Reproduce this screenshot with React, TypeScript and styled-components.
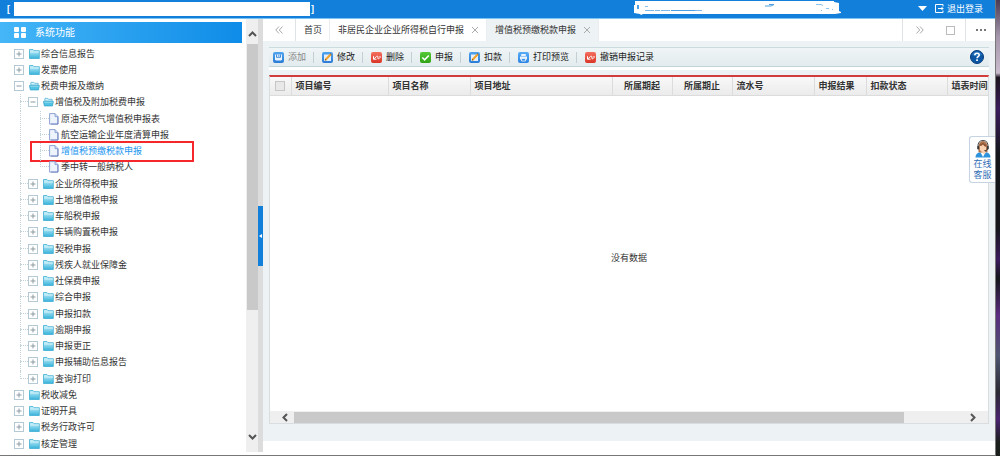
import React from 'react';
import styled, { createGlobalStyle, css } from 'styled-components';

const GlobalStyle = createGlobalStyle`
  * { box-sizing: border-box; }
  body {
    margin: 0;
    background: #fff;
    color: #333;
    font: 9px/16px "Liberation Sans", "Noto Sans CJK SC", sans-serif;
  }
  button {
    border: 0;
    padding: 0;
    background: none;
    color: inherit;
    font: inherit;
    cursor: pointer;
    white-space: nowrap;
  }
  a { color: inherit; text-decoration: none; }
  svg { display: block; flex: none; }
`;

const Desktop = styled.div`
  display: flex;
  min-height: 100vh;
`;

const Page = styled.div`
  flex: 1;
  min-width: 0;
  display: flex;
  flex-direction: column;
  border-bottom: 1px solid #777;
`;

const Backdrop = styled.div`
  width: 5px;
  border-left: 1px solid #777;
  background: linear-gradient(#4a3a52 0, #a596ab 8%, #c9bccd 16%, #1c1620 17%, #3a1c5c 24%, #14161a 34%,
    #15151a 50%, #3b1a5e 57%, #14161a 61%, #5a2b80 69%, #4d5670 78%, #2b2a33 86%, #4a2470 92%, #1a1f1c 97%);
`;

/* ---------- top bar ---------- */

const TopBar = styled.header`
  height: 19px;
  display: flex;
  align-items: center;
  padding: 0 12px 1px 7px;
  background: #127fdb;
  border-bottom: 1px solid #7cc4f2;
  color: #fff;
`;

const Company = styled.div`
  display: flex;
  align-items: center;
  flex: 1;
  font-weight: bold;
`;

const NameBlank = styled.span`
  width: 296px;
  height: 14px;
  margin: 0 1px 0 4px;
  background: #fff;
`;

const LogoutLink = styled.a`
  display: flex;
  align-items: center;
  gap: 3px;
`;

const MenuButton = styled.button`
  margin: 0 8px 0 77px;
`;

/* ---------- frame ---------- */

const Body = styled.div`
  flex: 1;
  display: flex;
  min-height: 0;
`;

const Sidebar = styled.nav`
  width: 246px;
  flex: none;
  padding-top: 3px;
`;

const SidebarTitle = styled.h1`
  display: flex;
  align-items: center;
  gap: 9px;
  height: 21px;
  margin: 0 4px 3px 0;
  padding-left: 14px;
  background: linear-gradient(90deg, #45b6f7, #0f8ce8);
  color: #fff;
  font-size: 10px;
  font-weight: normal;
`;

const VScroll = styled.div`
  width: 12px;
  flex: none;
  display: flex;
  flex-direction: column;
  align-items: center;
  margin-bottom: 3px;
  padding: 12px 0;
  background: #efefef;
`;

const VThumb = styled.div`
  width: 11px;
  flex: 0 0 65%;
  margin-top: 7px;
  background: #c9c9c9;
`;

const Splitter = styled.div`
  width: 5px;
  flex: none;
  display: flex;
  flex-direction: column;
  justify-content: center;
  margin-bottom: 3px;
  background: #dcdcdc;
`;

const SplitHandle = styled.button`
  height: 60px;
  display: flex;
  align-items: center;
  justify-content: center;
  background: #127fdb;
`;

/* ---------- tree ---------- */

const Tree = styled.ul`
  list-style: none;
  margin: 0;
  padding: 0 0 2px;
`;

const TreeRow = styled.li<{ $selected?: boolean }>`
  position: relative;
  display: flex;
  align-items: center;
  height: 16px;
  padding-left: 14px;
  color: ${(p) => (p.$selected ? '#2196f0' : '#333')};
  &:nth-child(4n) { margin-bottom: 1px; }
`;

const Guide = styled.span<{ $deep?: boolean; $end?: boolean; $tick?: boolean }>`
  position: relative;
  flex: none;
  align-self: stretch;
  width: ${(p) => (p.$deep ? 21 : 14)}px;
  &::before {
    content: '';
    position: absolute;
    left: ${(p) => (p.$deep ? 12 : 6)}px;
    top: 0;
    bottom: ${(p) => (p.$end ? '50%' : '-1px')};
    border-left: 1px dotted #c3d3da;
  }
  ${(p) =>
    p.$tick &&
    css`
      &::after {
        content: '';
        position: absolute;
        left: ${p.$deep ? 12 : 6}px;
        right: 0;
        top: 7px;
        border-top: 1px dotted #c3d3da;
      }
    `}
`;

const Toggle = styled.button`
  width: 10px;
  height: 10px;
  flex: none;
  margin-right: 5px;
`;

const TreeLink = styled.a<{ $leaf?: boolean }>`
  display: flex;
  align-items: center;
  gap: ${(p) => (p.$leaf ? 2 : 1)}px;
  white-space: nowrap;
`;

const Highlight = styled.span`
  position: absolute;
  left: 30px;
  top: -2px;
  width: 164px;
  height: 21px;
  border: 2px solid #f5272b;
  pointer-events: none;
`;

/* ---------- main area ---------- */

const Main = styled.main`
  flex: 1;
  min-width: 0;
  display: flex;
  flex-direction: column;
  margin-bottom: 14px;
  background: #edf2f5;
`;

const TabBar = styled.div`
  display: flex;
  height: 22px;
  background: #fff;
`;

const Tab = styled.div<{ $active?: boolean }>`
  display: flex;
  align-items: center;
  gap: 7px;
  padding: 0 7px 0 8px;
  border-right: 1px solid #eaeef1;
  background: ${(p) => (p.$active ? '#edf2f5' : '#fff')};
`;

const TabTool = styled.button<{ $w: number; $line?: 'left' | 'right' }>`
  width: ${(p) => p.$w}px;
  display: flex;
  align-items: center;
  justify-content: center;
  ${(p) => p.$line && `border-${p.$line}: 1px solid #dfe3e6;`}
`;

const TabSpace = styled.div`
  flex: 1;
`;

const Content = styled.section`
  flex: 1;
  display: flex;
  flex-direction: column;
  margin: 6px 6px 17px;
`;

const Toolbar = styled.div`
  display: flex;
  align-items: center;
  height: 20px;
  padding-right: 5px;
  border-top: 1px solid #cbdbe0;
  border-bottom: 1px solid #c3d5da;
  background: linear-gradient(#f0f5f7, #e2ebee);
`;

const ToolItem = styled.div`
  display: flex;
  align-items: center;
  & + &::before {
    content: '';
    height: 11px;
    border-left: 1px solid #c3cfd4;
  }
`;

const ToolButton = styled.button<{ $first?: boolean }>`
  display: flex;
  align-items: center;
  gap: 4px;
  padding: 0 7px 0 ${(p) => (p.$first ? 4 : 8)}px;
  color: #222;
  &:disabled { color: #888; }
`;

const HelpButton = styled.button`
  margin-left: auto;
`;

const Strip = styled.div`
  height: 3px;
  margin-bottom: 5px;
  background: #fff;
`;

const Grid = styled.div`
  flex: 1;
  display: flex;
  flex-direction: column;
  border: 1px solid #dadddf;
  border-top: 2px solid #d13c3c;
  background: #fff;
`;

const TableClip = styled.div`
  overflow: hidden;
`;

const Table = styled.table`
  width: 100%;
  table-layout: fixed;
  border-collapse: collapse;
`;

const Th = styled.th<{ $center?: boolean }>`
  height: 18px;
  padding: 0 0 0 ${(p) => (p.$center ? 0 : 4)}px;
  border-right: 1px solid #dcdcdc;
  border-bottom: 1px solid #dcdcdc;
  background: linear-gradient(#f8f8f8, #ebebeb);
  color: #333;
  font-weight: bold;
  line-height: 16px;
  text-align: ${(p) => (p.$center ? 'center' : 'left')};
  white-space: nowrap;
  &:last-child { border-right: 0; }
`;

const CheckBox = styled.input`
  appearance: none;
  display: block;
  width: 10px;
  height: 10px;
  margin: 0 auto;
  border: 1px solid #c6c6c6;
  background: #e8e8e8;
`;

const Empty = styled.div`
  flex: 1;
  display: flex;
  align-items: center;
  justify-content: center;
  padding-top: 9px;
`;

const HScroll = styled.div`
  display: flex;
  align-items: center;
  height: 12px;
  padding: 0 12px;
  background: #efefef;
`;

const HTrack = styled.div`
  flex: 1;
  margin: 0 6px;
`;

const HThumb = styled.div`
  width: 91%;
  height: 11px;
  background: #c9c9c9;
`;

const ServiceLink = styled.a`
  position: fixed;
  right: 5px;
  top: 136px;
  width: 26px;
  height: 47px;
  display: flex;
  flex-direction: column;
  align-items: center;
  padding-top: 2px;
  border: 1px solid #c5d3e2;
  border-right: 0;
  border-radius: 3px 0 0 3px;
  background: #fff;
  color: #2f6db5;
  line-height: 11px;
`;

/* ---------- icons ---------- */

const Chevron = ({ d, w, h, color = '#555', stroke = 2 }: { d: string; w: number; h: number; color?: string; stroke?: number }) => (
  <svg width={w} height={h} viewBox={`0 0 ${w} ${h}`} fill="none" stroke={color} strokeWidth={stroke}>
    <path d={d} />
  </svg>
);

const CloseIcon = () => <Chevron w={8} h={8} d="M1 1l6 6M7 1L1 7" color="#aaa" stroke={1} />;

const PlusMinus = ({ open }: { open?: boolean }) => (
  <svg width="10" height="10" viewBox="0 0 10 10">
    <rect x=".5" y=".5" width="9" height="9" fill="#fff" stroke="#b4c9d3" />
    <path d={open ? 'M2.5 5h5' : 'M2.5 5h5M5 2.5v5'} stroke="#8a9ba3" />
  </svg>
);

const Folder = ({ open }: { open?: boolean }) =>
  open ? (
    <svg width="11" height="10" viewBox="0 0 12 10">
      <path d="M2 4V1.5Q2 1 2.500 1H5l1 1h4v2z" fill="#d5f3fa" stroke="#45acd0" strokeWidth=".8" />
      <path d="M.5 4.500h10.800L10.300 9.300H1.500z" fill="#52c3e3" stroke="#2c9fcb" strokeWidth=".8" />
      <path d="M1.500 5.200h9" stroke="#b8eaf6" strokeWidth=".8" />
    </svg>
  ) : (
    <svg width="11" height="10" viewBox="0 0 11 10">
      <defs>
        <linearGradient id="fold" x1="0" y1="0" x2="0" y2="1">
          <stop offset="0" stopColor="#c9f1fa" />
          <stop offset="1" stopColor="#36b2db" />
        </linearGradient>
      </defs>
      <path d="M.5 9.500V.5H4l1 1.200h5.300v7.800z" fill="url(#fold)" stroke="#3fadd2" strokeWidth=".8" />
      <path d="M1 3h9" stroke="#eafafd" strokeWidth=".7" />
    </svg>
  );

const FileIcon = () => (
  <svg width="10" height="12" viewBox="0 0 10 12">
    <path d="M.6.6h5.400l3 3v7.500H.6z" fill="#eef4fd" stroke="#8298cc" strokeWidth=".9" />
    <path d="M6 .6v3h3" fill="#c6d5f0" stroke="#8298cc" strokeWidth=".8" />
    <path d="M8.900 4v7H2" fill="none" stroke="#5a70b4" strokeWidth=".7" />
  </svg>
);

type Glyph = 'save' | 'edit' | 'undo' | 'check' | 'print';

const toolColor: Record<Glyph, [string, string]> = {
  save: ['#4fa3ee', '#2b7cd6'],
  edit: ['#4fa3ee', '#2b7cd6'],
  print: ['#58abf5', '#2d86e4'],
  undo: ['#f4705f', '#da3526'],
  check: ['#55c936', '#2ea314'],
};

const ToolIcon = ({ glyph }: { glyph: Glyph }) => (
  <svg width="11" height="11" viewBox="0 0 11 11">
    <defs>
      <linearGradient id={`tool-${glyph}`} x1="0" y1="0" x2="0" y2="1">
        <stop offset="0" stopColor={toolColor[glyph][0]} />
        <stop offset="1" stopColor={toolColor[glyph][1]} />
      </linearGradient>
    </defs>
    <rect width="11" height="11" rx="2" fill={`url(#tool-${glyph})`} />
    {glyph === 'save' && (
      <>
        <path d="M2 2.500h7v5l-1 1H3l-1-1z" fill="#e8f3fd" />
        <path d="M3.500 2.500v2.800h4V2.500M5.800 3v1.500" fill="none" stroke="#2f80d8" strokeWidth=".9" />
      </>
    )}
    {glyph === 'edit' && (
      <>
        <path d="M2 2.500h7v6.500H2z" fill="#e4effb" />
        <path d="M3.300 8L8.800 2.300" stroke="#f0a22a" strokeWidth="2" />
        <path d="M2.700 8.600l.5-1.600 1.200 1.200z" fill="#604020" />
        <path d="M8.200 1.600l1.300 1.300" stroke="#7d5a3a" strokeWidth="1" />
      </>
    )}
    {glyph === 'undo' && (
      <path d="M2.500 4.200v3h3M2.800 7l2.700-2.600q1.200-.9 1.400.4v1.400q.2 1.200 1.200.4l.9-.9V4" fill="none" stroke="#fff" strokeWidth="1" />
    )}
    {glyph === 'check' && <path d="M2.300 5.500l2.300 2.300 4.200-4.300" fill="none" stroke="#fff" strokeWidth="1.600" />}
    {glyph === 'print' && (
      <>
        <path d="M3.200 2h4.600v2H3.200zM2 4.500h7v3H2z" fill="#e8f3fd" />
        <path d="M3.500 6.500h4v2.500h-4z" fill="#3c90e8" stroke="#e8f3fd" strokeWidth=".8" />
      </>
    )}
  </svg>
);

const HelpIcon = () => (
  <svg width="14" height="14" viewBox="0 0 14 14">
    <circle cx="7" cy="7" r="6.500" fill="#0c56a4" stroke="#083d7c" />
    <path d="M2 5a5.300 5.300 0 0 1 10 0q-5 2.500-10 0" fill="#3b85cd" opacity=".6" />
    <path d="M4.800 5.300q0-2 2.200-2t2.200 1.800q0 1-1.200 1.700-.9.500-.9 1.500" fill="none" stroke="#fff" strokeWidth="1.600" />
    <rect x="6.200" y="9.300" width="1.700" height="1.700" fill="#fff" />
  </svg>
);

const Agent = () => (
  <svg width="18" height="20" viewBox="0 0 18 20">
    <path d="M1.500 18.500q0-4.500 4.500-5.200h6q4.500.7 4.500 5.200z" fill="#2f93dc" />
    <path d="M6 12.500h6l-3 5.500z" fill="#fff" />
    <path d="M4.500 13q-1-11 4.500-11t4.500 11l-2 .5h-5z" fill="#b0714a" />
    <ellipse cx="9" cy="8.500" rx="3.300" ry="4.500" fill="#fad2b2" />
    <path d="M5.500 7Q6 3.500 9.500 4q3 .5 3 4Q10 7.500 9 5.500 8 7 5.500 7" fill="#8f5533" />
    <path d="M4 8q-.3-6.500 5-6.500T14 8" fill="none" stroke="#444" />
    <rect x="3.200" y="7" width="2" height="3.500" rx="1" fill="#333" />
    <rect x="12.800" y="7" width="2" height="3.500" rx="1" fill="#333" />
    <path d="M13.500 10q-.5 2-3.500 2" fill="none" stroke="#333" />
    <path d="M8 13l2-1.500 2 2-2 2z" fill="#fad2b2" />
  </svg>
);

const Scribble = () => (
  <svg width="207" height="15" viewBox="0 0 207 15">
    <path d="M1 0h199v1l5 1v8l2 1v1l-6 1H9l-2 1-1-1-6-1V4h1z" fill="#fff" />
    <path d="M4 4v4" stroke="#127fdb" strokeWidth="1.500" />
    <path d="M11 5.500h3M192 7.500h3M187 9.500h1M198 8l1 1M182 3.500h5l2 1" stroke="#8cc3ee" fill="none" />
    <path d="M11 9.500h57" stroke="#7db9ea" strokeDasharray="9 1 5 1" />
    <path d="M37 9.500h24M135 3.500h5l-3 1.500h-6" stroke="#4d9fe2" fill="none" />
  </svg>
);

/* ---------- data ---------- */

type Node = { label: string; depth: 0 | 1 | 2; open?: boolean; leaf?: boolean; end?: boolean; selected?: boolean };

const nodes: Node[] = [
  { label: '综合信息报告', depth: 0 },
  { label: '发票使用', depth: 0 },
  { label: '税费申报及缴纳', depth: 0, open: true },
  { label: '增值税及附加税费申报', depth: 1, open: true },
  { label: '原油天然气增值税申报表', depth: 2, leaf: true },
  { label: '航空运输企业年度清算申报', depth: 2, leaf: true },
  { label: '增值税预缴税款申报', depth: 2, leaf: true, selected: true },
  { label: '季中转一般纳税人', depth: 2, leaf: true, end: true },
  { label: '企业所得税申报', depth: 1 },
  { label: '土地增值税申报', depth: 1 },
  { label: '车船税申报', depth: 1 },
  { label: '车辆购置税申报', depth: 1 },
  { label: '契税申报', depth: 1 },
  { label: '残疾人就业保障金', depth: 1 },
  { label: '社保费申报', depth: 1 },
  { label: '综合申报', depth: 1 },
  { label: '申报扣款', depth: 1 },
  { label: '逾期申报', depth: 1 },
  { label: '申报更正', depth: 1 },
  { label: '申报辅助信息报告', depth: 1 },
  { label: '查询打印', depth: 1, end: true },
  { label: '税收减免', depth: 0 },
  { label: '证明开具', depth: 0 },
  { label: '税务行政许可', depth: 0 },
  { label: '核定管理', depth: 0 },
];

const tools: { label: string; glyph: Glyph; disabled?: boolean }[] = [
  { label: '添加', glyph: 'save', disabled: true },
  { label: '修改', glyph: 'edit' },
  { label: '删除', glyph: 'undo' },
  { label: '申报', glyph: 'check' },
  { label: '扣款', glyph: 'edit' },
  { label: '打印预览', glyph: 'print' },
  { label: '撤销申报记录', glyph: 'undo' },
];

const columns: { label: string; width?: number; center?: boolean }[] = [
  { label: '项目编号', width: 97 },
  { label: '项目名称', width: 82 },
  { label: '项目地址', width: 142 },
  { label: '所属期起', width: 60, center: true },
  { label: '所属期止', width: 60, center: true },
  { label: '流水号', width: 82 },
  { label: '申报结果', width: 52 },
  { label: '扣款状态', width: 81 },
  { label: '填表时间' },
];

const tabs = [
  { label: '首页' },
  { label: '非居民企业企业所得税自行申报', closable: true },
  { label: '增值税预缴税款申报', closable: true, active: true },
];

export default function App() {
  return (
    <Desktop>
      <GlobalStyle />
      <Page>
        <TopBar>
          <Company>
            [<NameBlank />]
          </Company>
          <Scribble />
          <MenuButton aria-label="菜单">
            <svg width="9" height="5" viewBox="0 0 9 5"><path d="M0 0h9L4.500 5z" fill="#fff" /></svg>
          </MenuButton>
          <LogoutLink href="#logout">
            <svg width="9" height="9" viewBox="0 0 9 9" fill="none" stroke="#fff">
              <path d="M8 2.500V.5H.5v8H8V6.500M3 4.500h5M6.500 3L8 4.500 6.500 6" />
            </svg>
            退出登录
          </LogoutLink>
        </TopBar>

        <Body>
          <Sidebar>
            <SidebarTitle>
              <svg width="12" height="11" viewBox="0 0 12 11" fill="#fff">
                <rect width="5" height="5" rx="1" />
                <rect x="7" width="5" height="5" rx="1" />
                <rect y="6" width="5" height="5" rx="1" />
                <rect x="7" y="6" width="5" height="5" rx="1" />
              </svg>
              系统功能
            </SidebarTitle>
            <Tree>
              {nodes.map((n) => (
                <TreeRow key={n.label} $selected={n.selected}>
                  {n.depth > 0 && <Guide $tick={n.depth === 1} $end={n.depth === 1 && n.end} />}
                  {n.depth > 1 && <Guide $deep $tick $end={n.end} />}
                  {!n.leaf && (
                    <Toggle aria-label={`${n.open ? '收起' : '展开'}${n.label}`}>
                      <PlusMinus open={n.open} />
                    </Toggle>
                  )}
                  <TreeLink href="#tree" $leaf={n.leaf}>
                    {n.leaf ? <FileIcon /> : <Folder open={n.open} />}
                    {n.label}
                  </TreeLink>
                  {n.selected && <Highlight />}
                </TreeRow>
              ))}
            </Tree>
          </Sidebar>
          <VScroll>
            <Chevron w={9} h={6} d="M1 5l3.500-3.500L8 5" />
            <VThumb />
            <TabSpace />
            <Chevron w={9} h={6} d="M1 1l3.500 3.500L8 1" />
          </VScroll>
          <Splitter>
            <SplitHandle aria-label="收起侧栏">
              <svg width="3" height="4" viewBox="0 0 3 4"><path d="M3 0v4L0 2z" fill="#fff" /></svg>
            </SplitHandle>
          </Splitter>

          <Main>
            <TabBar>
              <TabTool $w={33} $line="right" aria-label="向左">
                <Chevron w={8} h={8} d="M4 .5L.8 4 4 7.500M7.500 .5L4.300 4l3.200 3.500" color="#aaa" stroke={1} />
              </TabTool>
              {tabs.map((t) => (
                <Tab key={t.label} $active={t.active}>
                  <a href="#tab">{t.label}</a>
                  {t.closable && <button aria-label="关闭"><CloseIcon /></button>}
                </Tab>
              ))}
              <TabSpace />
              <TabTool $w={34} $line="left" aria-label="向右">
                <Chevron w={8} h={8} d="M.5 .5L3.700 4 .5 7.500M4 .5L7.200 4 4 7.500" color="#aaa" stroke={1} />
              </TabTool>
              <TabTool $w={29} aria-label="最大化">
                <svg width="9" height="9"><rect x=".5" y=".5" width="8" height="8" fill="none" stroke="#bbb" /></svg>
              </TabTool>
              <TabTool $w={30} $line="left" aria-label="更多">
                <svg width="10" height="2" fill="#777"><path d="M0 0h2v2H0zM4 0h2v2H4zM8 0h2v2H8z" /></svg>
              </TabTool>
            </TabBar>

            <Content>
              <Toolbar>
                {tools.map((t, i) => (
                  <ToolItem key={t.label}>
                    <ToolButton $first={i === 0} disabled={t.disabled}>
                      <ToolIcon glyph={t.glyph} />
                      {t.label}
                    </ToolButton>
                  </ToolItem>
                ))}
                <HelpButton aria-label="帮助"><HelpIcon /></HelpButton>
              </Toolbar>
              <Strip />
              <Grid>
                <TableClip>
                  <Table>
                    <colgroup>
                      <col width={21} />
                      {columns.map((c) => <col key={c.label} width={c.width} />)}
                    </colgroup>
                    <thead>
                      <tr>
                        <Th $center><CheckBox type="checkbox" aria-label="全选" /></Th>
                        {columns.map((c) => <Th key={c.label} $center={c.center}>{c.label}</Th>)}
                      </tr>
                    </thead>
                  </Table>
                </TableClip>
                <Empty>没有数据</Empty>
                <HScroll>
                  <Chevron w={6} h={9} d="M5 1L1.500 4.500 5 8" />
                  <HTrack><HThumb /></HTrack>
                  <Chevron w={6} h={9} d="M1 1l3.500 3.500L1 8" />
                </HScroll>
              </Grid>
            </Content>
          </Main>
        </Body>
      </Page>
      <Backdrop />
      <ServiceLink href="#service">
        <Agent />
        <span>在线</span>
        <span>客服</span>
      </ServiceLink>
    </Desktop>
  );
}
